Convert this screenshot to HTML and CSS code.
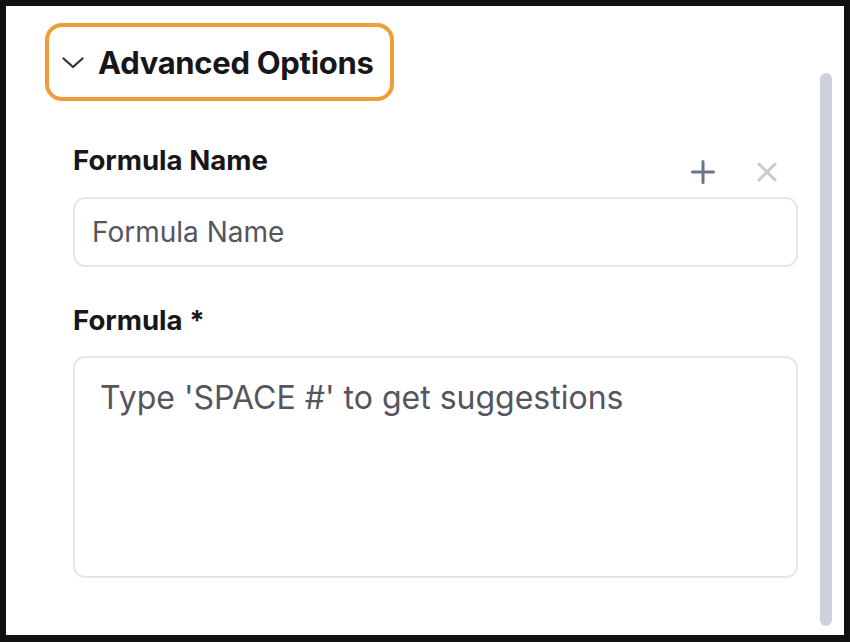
FILE: index.html
```html
<!DOCTYPE html>
<html>
<head>
<meta charset="utf-8">
<link rel="stylesheet" href="styles.css">
</head>
<body>
<div class="panel">
  <div class="content">
    <button class="adv">
      <svg class="chev" width="22" height="12" viewBox="0 0 22 12"><path d="M1.5 1.5 L11 10 L20.5 1.5" fill="none" stroke="#2d3648" stroke-width="2.3" stroke-linecap="round" stroke-linejoin="round"/></svg>
      <span>Advanced Options</span>
    </button>
    <div class="fields">
      <div class="row">
        <label class="lbl">Formula Name</label>
        <div class="icons">
          <svg width="24" height="24" viewBox="0 0 24 24"><path d="M12 1.5 V22.5 M1.5 12 H22.5" stroke="#6b7588" stroke-width="3" stroke-linecap="round"/></svg>
          <svg width="20" height="20" viewBox="0 0 20 20"><path d="M2 2 L18 18 M18 2 L2 18" stroke="#c6cad1" stroke-width="3" stroke-linecap="round"/></svg>
        </div>
      </div>
      <div class="input">Formula Name</div>
      <label class="lbl lbl2">Formula *</label>
      <div class="area">Type 'SPACE #' to get suggestions</div>
    </div>
  </div>
  <div class="track"><div class="thumb"></div></div>
</div>
</body>
</html>
```
FILE: styles.css
```css
html, body { margin: 0; padding: 0; }
body {
  background: #111111;
  font-family: Inter, "Noto Sans", sans-serif;
  padding: 6px 6px 7px 6px;
}
.panel {
  background: #ffffff;
  height: 629px;
  display: flex;
}
.content {
  flex: 1;
  padding: 17px 0 0 39px;
}
.adv {
  display: flex;
  align-items: center;
  box-sizing: border-box;
  width: 349px;
  height: 78px;
  border: 4px solid #f29c38;
  border-radius: 17px;
  background: #fff;
  padding: 0 0 0 13px;
  font-family: Inter, sans-serif;
  font-weight: 700;
  font-size: 31px;
  color: #17171a;
  letter-spacing: -0.3px;
}
.chev { margin-right: 14px; margin-top: 2px; }
.fields {
  width: 725px;
  margin-left: 28px;
  padding-top: 43px;
}
.row {
  display: flex;
  justify-content: space-between;
  align-items: flex-start;
  height: 33px;
}
.lbl {
  display: block;
  font-weight: 700;
  font-size: 27.6px;
  line-height: 33px;
  color: #17171a;
}
.icons {
  display: flex;
  align-items: center;
  gap: 42px;
  margin-top: 16px;
  margin-right: 21px;
}
.input {
  box-sizing: border-box;
  margin-top: 20px;
  height: 70px;
  border: 2px solid #e6e6e8;
  border-radius: 12px;
  padding: 0 0 0 17px;
  display: flex;
  align-items: center;
  font-size: 28px;
  color: #55555f;
}
.lbl2 { margin-top: 37px; }
.area {
  box-sizing: border-box;
  margin-top: 19px;
  height: 222px;
  border: 2px solid #e6e6e8;
  border-radius: 12px;
  padding: 20px 0 0 25px;
  font-size: 32px;
  line-height: 40px;
  color: #55555f;
}
.track {
  width: 12px;
  margin: 67px 12px 9px 22px;
}
.thumb {
  height: 100%;
  background: #ced1d9;
  border-radius: 6px;
}
```
